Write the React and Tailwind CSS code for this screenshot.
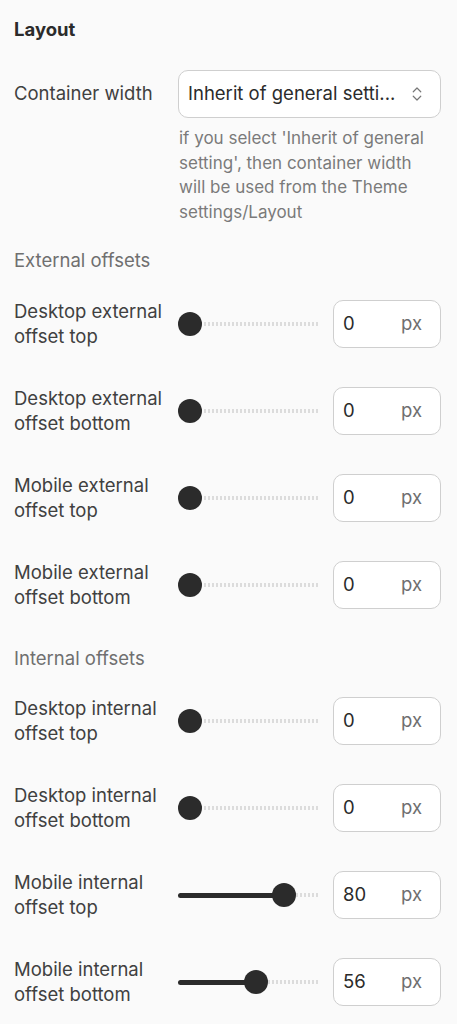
import { ChevronsUpDown } from "lucide-react";

const groups = [
  {
    title: "External offsets",
    rows: [
      { label: ["Desktop external", "offset top"], value: 0 },
      { label: ["Desktop external", "offset bottom"], value: 0 },
      { label: ["Mobile external", "offset top"], value: 0 },
      { label: ["Mobile external", "offset bottom"], value: 0 },
    ],
  },
  {
    title: "Internal offsets",
    rows: [
      { label: ["Desktop internal", "offset top"], value: 0 },
      { label: ["Desktop internal", "offset bottom"], value: 0 },
      { label: ["Mobile internal", "offset top"], value: 80 },
      { label: ["Mobile internal", "offset bottom"], value: 56 },
    ],
  },
];

const Slider = ({ value }) => {
  // track is 142px wide, thumb 24px
  const left = (value / 100) * 118;
  return (
    <div className="relative w-[142px] h-6 flex items-center">
      <div
        className="absolute left-[14px] right-0 h-[4px] rounded-full"
        style={{
          backgroundImage:
            "repeating-linear-gradient(90deg, #dcdcdc 0 2px, transparent 2px 4px)",
        }}
      />
      {value > 0 && (
        <div
          className="absolute left-0 h-[5px] rounded-full bg-[#2b2b2b]"
          style={{ width: left + 12 }}
        />
      )}
      <div
        className="absolute top-0 w-6 h-6 rounded-full bg-[#2b2b2b]"
        style={{ left }}
      />
    </div>
  );
};

const OffsetRow = ({ label, value }) => (
  <div className="flex items-center h-[50px]">
    <div className="w-[164px] leading-[25px] text-[18.5px] text-[#404040]">
      {label[0]}
      <br />
      {label[1]}
    </div>
    <Slider value={value} />
    <div className="ml-[13px] w-[108px] h-[48px] rounded-[10px] border border-[#cfcfcf] bg-white flex items-center justify-between pl-[9px] pr-[18px] text-[18.5px]">
      <span className="text-[#2b2b2b]">{value}</span>
      <span className="text-[#6f6f6f]">px</span>
    </div>
  </div>
);

export default function App() {
  return (
    <div
      className="min-h-screen bg-[#fafafa] px-[14px] pt-[17px] pb-6"
      style={{ fontFamily: "Inter, 'Noto Sans', sans-serif" }}
    >
      <h2 className="text-[18.5px] leading-[25px] font-bold text-[#2b2b2b]">
        Layout
      </h2>

      {/* CONTAINER WIDTH */}
      <div className="mt-[28px] flex items-center">
        <div className="w-[164px] text-[18.5px] text-[#404040]">
          Container width
        </div>
        <div className="w-[263px] h-[48px] rounded-[10px] border border-[#cfcfcf] bg-white flex items-center justify-between pl-[9px] pr-[14px] text-[18.5px] text-[#2b2b2b]">
          <span>Inherit of general setti...</span>
          <ChevronsUpDown className="w-[18px] h-[18px] text-[#777]" strokeWidth={1.6} />
        </div>
      </div>
      <p className="ml-[165px] w-[258px] mt-[8px] text-[17px] leading-[24.5px] text-[#7a7a7a]">
        if you select 'Inherit of general setting', then container width will be
        used from the Theme settings/Layout
      </p>

      {groups.map((g, gi) => (
        <div key={g.title} className={gi === 0 ? "mt-[24px]" : "mt-[36px]"}>
          <div className="text-[18.5px] leading-[25px] text-[#6f6f6f]">
            {g.title}
          </div>
          <div
            className={`flex flex-col gap-[37px] ${
              gi === 0 ? "mt-[26px]" : "mt-[25px]"
            }`}
          >
            {g.rows.map((r, i) => (
              <OffsetRow key={i} label={r.label} value={r.value} />
            ))}
          </div>
        </div>
      ))}
    </div>
  );
}
